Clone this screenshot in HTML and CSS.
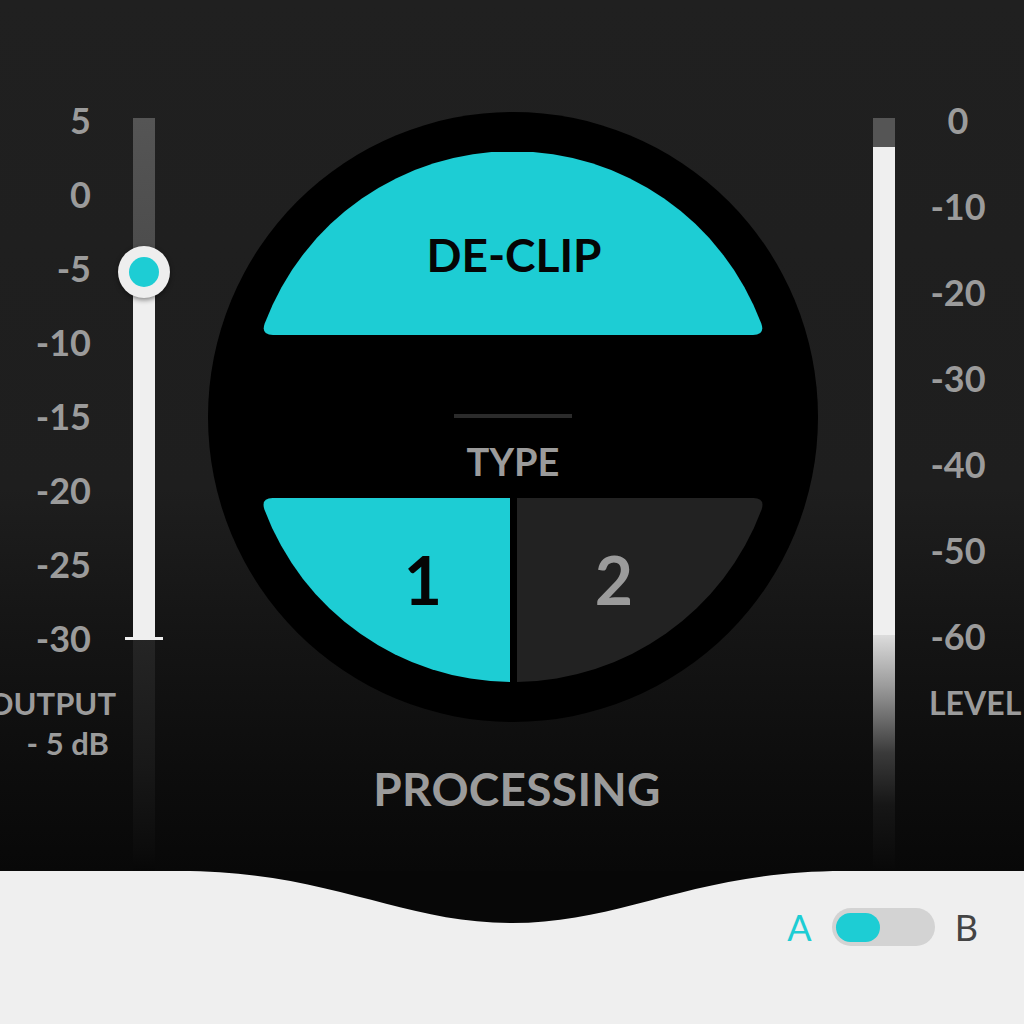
FILE: index.html
```html
<!DOCTYPE html>
<html lang="en">
<head>
<meta charset="utf-8">
<title>De-Clip</title>
<link rel="stylesheet" href="styles.css">
</head>
<body>
<main class="stage">
  <section class="col-left">
    <div class="scale scale-out">
      <div class="tick-label">5</div>
      <div class="tick-label">0</div>
      <div class="tick-label">-5</div>
      <div class="tick-label">-10</div>
      <div class="tick-label">-15</div>
      <div class="tick-label">-20</div>
      <div class="tick-label">-25</div>
      <div class="tick-label">-30</div>
      <div class="caption caption-out">OUTPUT</div>
      <div class="caption caption-val">- 5 dB</div>
    </div>
    <div class="track track-out">
      <div class="seg seg-gray-top"></div>
      <div class="seg seg-fill-out"></div>
      <div class="seg seg-rest-out"></div>
      <div class="floor-tick"></div>
      <div class="thumb"><div class="thumb-dot"></div></div>
    </div>
  </section>

  <section class="col-center">
    <div class="dial">
      <div class="dial-inner">
        <div class="mode-btn">DE-CLIP</div>
        <div class="type-area">
          <div class="type-rule"></div>
          <div class="type-label">TYPE</div>
        </div>
        <div class="type-choices">
          <div class="choice choice-on">1</div>
          <div class="choice choice-off">2</div>
        </div>
      </div>
    </div>
    <div class="section-title">PROCESSING</div>
  </section>

  <section class="col-right">
    <div class="track track-level">
      <div class="seg seg-level-top"></div>
      <div class="seg seg-level-fill"></div>
      <div class="seg seg-level-rest"></div>
    </div>
    <div class="scale scale-level">
      <div class="tick-label">0</div>
      <div class="tick-label">-10</div>
      <div class="tick-label">-20</div>
      <div class="tick-label">-30</div>
      <div class="tick-label">-40</div>
      <div class="tick-label">-50</div>
      <div class="tick-label">-60</div>
      <div class="caption caption-level">LEVEL</div>
    </div>
  </section>
</main>

<footer class="footer">
  <svg class="wave" width="1024" height="60" viewBox="0 0 1024 60" aria-hidden="true">
    <path d="M0 0 L180 0 C330 0 400 52 512 52 C624 52 694 0 844 0 L1024 0 L1024 -2 L0 -2 Z" fill="#070707"/>
  </svg>
  <div class="ab">
    <span class="ab-a">A</span>
    <span class="switch"><span class="switch-knob"></span></span>
    <span class="ab-b">B</span>
  </div>
</footer>
</body>
</html>
```

FILE: styles.css
```css
* { box-sizing: border-box; }

html, body {
  margin: 0;
  padding: 0;
}

body {
  width: 1024px;
  height: 1024px;
  overflow: hidden;
  background: #efefef;
  font-family: "Lato", "Liberation Sans", sans-serif;
  font-weight: 700;
  color: #9b9b9b;
}

.stage {
  height: 871px;
  display: grid;
  grid-template-columns: 208px 610px 206px;
  background: linear-gradient(to bottom, #202020 0%, #1e1e1e 56%, #151515 72%, #0d0d0d 88%, #080808 100%);
}

/* ---------- left column ---------- */
.col-left {
  display: flex;
  align-items: flex-start;
}

.scale {
  display: flex;
  flex-direction: column;
}

.scale-out {
  width: 116px;
  margin-top: 83px;
  margin-right: 17px;
  text-align: right;
}

.tick-label {
  font-size: 36px;
  height: 74px;
  line-height: 74px;
  white-space: nowrap;
}

.scale-out .tick-label { padding-right: 25px; }

.caption {
  font-size: 31px;
  height: 40px;
  line-height: 40px;
  white-space: nowrap;
}

.caption-out {
  margin-top: 8px;
  direction: rtl;
  text-align: right;
}

.caption-val { padding-right: 7px; }

.track {
  position: relative;
  width: 22px;
  height: 753px;
  margin-top: 118px;
  display: flex;
  flex-direction: column;
}

.seg { width: 100%; }

.seg-gray-top {
  height: 154px;
  background: linear-gradient(to bottom, #555 0%, #4b4b4b 100%);
}

.seg-fill-out {
  height: 366px;
  background: #efefef;
}

.seg-rest-out {
  flex: 1;
  background: linear-gradient(to bottom, #252525 0%, #181818 55%, #0c0c0c 90%, #070707 100%);
}

.floor-tick {
  position: absolute;
  top: 519px;
  left: -8px;
  width: 38px;
  height: 3px;
  background: #efefef;
}

.thumb {
  position: absolute;
  top: 128px;
  left: -15px;
  width: 52px;
  height: 52px;
  border-radius: 50%;
  background: #eeeeee;
  box-shadow: 0 2px 5px rgba(0, 0, 0, 0.45);
  display: flex;
  align-items: center;
  justify-content: center;
}

.thumb-dot {
  width: 30px;
  height: 30px;
  border-radius: 50%;
  background: #1dcdd4;
}

/* ---------- center dial ---------- */
.col-center {
  display: flex;
  flex-direction: column;
  align-items: center;
}

.dial {
  margin-top: 112px;
  width: 610px;
  height: 610px;
  border-radius: 50%;
  background: #000;
  padding: 40px;
}

.dial-inner {
  width: 530px;
  height: 530px;
  display: flex;
  flex-direction: column;
}

.mode-btn {
  height: 183px;
  flex: none;
  background: #1dcdd4;
  color: #050505;
  font-size: 46px;
  display: flex;
  align-items: center;
  justify-content: center;
  padding-top: 21px;
  padding-left: 2px;
  clip-path: path("M 16.7 171.6 A 265 265 0 0 1 513.3 171.6 Q 517.3 183 505 183 L 25 183 Q 12.7 183 16.7 171.6 Z");
}

.type-area {
  height: 163px;
  flex: none;
  display: flex;
  flex-direction: column;
  align-items: center;
}

.type-rule {
  width: 118px;
  height: 4px;
  margin-top: 79px;
  background: #2b2b2b;
}

.type-label {
  font-size: 38px;
  line-height: 40px;
  height: 40px;
  margin-top: 23px;
  color: #9b9b9b;
}

.type-choices {
  flex: 1;
  display: grid;
  grid-template-columns: 262px 261px;
  column-gap: 7px;
}

.choice {
  display: flex;
  align-items: center;
  justify-content: center;
  font-size: 66px;
  padding-bottom: 22px;
}

.choice-on {
  background: #1dcdd4;
  color: #050505;
  padding-left: 88px;
  clip-path: path("M 24.7 0 L 262 0 L 262 184 A 265 265 0 0 1 16.4 11.4 Q 12.7 0 24.7 0 Z");
}

.choice-off {
  background: #222222;
  color: #9b9b9b;
  padding-right: 67px;
  clip-path: path("M 0 0 L 236.3 0 Q 248.3 0 244.6 11.4 A 265 265 0 0 1 0 184 Z");
}

.section-title {
  margin-top: 37px;
  height: 60px;
  line-height: 60px;
  font-size: 46px;
  color: #9b9b9b;
  letter-spacing: 0.3px;
  padding-left: 8px;
}

/* ---------- right column ---------- */
.col-right {
  display: flex;
  align-items: flex-start;
}

.track-level {
  margin-left: 55px;
  margin-right: 13px;
}

.seg-level-top {
  height: 29px;
  background: #555;
}

.seg-level-fill {
  height: 488px;
  background: #efefef;
}

.seg-level-rest {
  flex: 1;
  background: linear-gradient(to bottom, #dcdcdc 0%, #9a9a9a 22%, #3a3a3a 50%, #161616 72%, #080808 100%);
}

.scale-level {
  width: 100px;
  margin-top: 77px;
  text-align: center;
}

.scale-level .tick-label {
  height: 86px;
  line-height: 86px;
}

.caption-level {
  margin-top: 4px;
  text-align: left;
  padding-left: 21px;
  font-size: 32px;
}

/* ---------- footer ---------- */
.footer {
  position: relative;
  height: 153px;
  display: flex;
  justify-content: flex-end;
  align-items: flex-start;
  padding-top: 37px;
  padding-right: 46px;
}

.wave {
  position: absolute;
  top: 0;
  left: 0;
}

.ab {
  display: flex;
  align-items: center;
  height: 38px;
  font-weight: 400;
  font-size: 36px;
}

.ab-a {
  color: #1dcdd4;
  margin-right: 20px;
}

.ab-b {
  color: #444;
  margin-left: 20px;
}

.switch {
  width: 103px;
  height: 38px;
  border-radius: 19px;
  background: #d3d3d3;
  display: flex;
  align-items: center;
  padding-left: 4px;
}

.switch-knob {
  width: 44px;
  height: 29px;
  border-radius: 15px;
  background: #1dcdd4;
}
```
